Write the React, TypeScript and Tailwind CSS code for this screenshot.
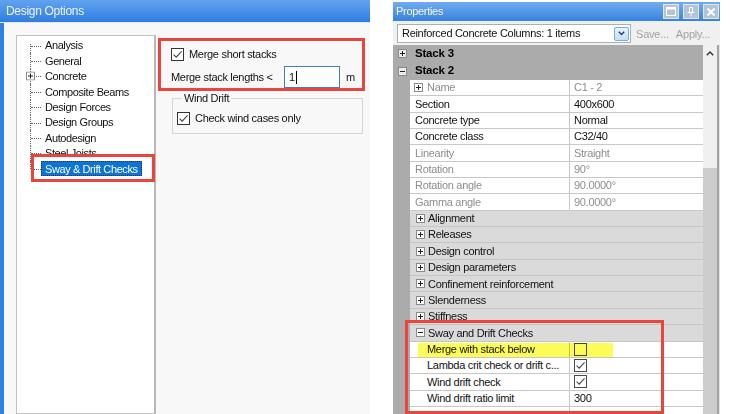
import React from 'react';

const treeItems = [
  'Analysis',
  'General',
  'Concrete',
  'Composite Beams',
  'Design Forces',
  'Design Groups',
  'Autodesign',
  'Steel Joists',
  'Sway & Drift Checks',
];

type GridRow =
  | { kind: 'prop'; name: string; value: string; dim?: boolean; plus?: boolean }
  | { kind: 'cat'; name: string; open?: boolean }
  | { kind: 'sub'; name: string; value?: string; check?: boolean; highlight?: boolean };

const rows: GridRow[] = [
  { kind: 'prop', name: 'Name', value: 'C1 - 2', dim: true, plus: true },
  { kind: 'prop', name: 'Section', value: '400x600' },
  { kind: 'prop', name: 'Concrete type', value: 'Normal' },
  { kind: 'prop', name: 'Concrete class', value: 'C32/40' },
  { kind: 'prop', name: 'Linearity', value: 'Straight', dim: true },
  { kind: 'prop', name: 'Rotation', value: '90°', dim: true },
  { kind: 'prop', name: 'Rotation angle', value: '90.0000°', dim: true },
  { kind: 'prop', name: 'Gamma angle', value: '90.0000°', dim: true },
  { kind: 'cat', name: 'Alignment' },
  { kind: 'cat', name: 'Releases' },
  { kind: 'cat', name: 'Design control' },
  { kind: 'cat', name: 'Design parameters' },
  { kind: 'cat', name: 'Confinement reinforcement' },
  { kind: 'cat', name: 'Slenderness' },
  { kind: 'cat', name: 'Stiffness' },
  { kind: 'cat', name: 'Sway and Drift Checks', open: true },
  { kind: 'sub', name: 'Merge with stack below', check: false, highlight: true },
  { kind: 'sub', name: 'Lambda crit check or drift c...', check: true },
  { kind: 'sub', name: 'Wind drift check', check: true },
  { kind: 'sub', name: 'Wind drift ratio limit', value: '300' },
  { kind: 'sub', name: '', value: '' },
];

function CheckBox({ checked, light }: { checked?: boolean; light?: boolean }) {
  return (
    <span
      className={`inline-flex h-[13px] w-[13px] shrink-0 items-center justify-center border bg-white ${
        light ? 'border-[#4a4a4a]' : 'border-[#333]'
      }`}
    >
      {checked && (
        <svg viewBox="0 0 11 11" className="h-[11px] w-[11px]">
          <path d="M1.6 5.6 L4.2 8.2 L9.6 2.4" fill="none" stroke="#444" strokeWidth="1.1" />
        </svg>
      )}
    </span>
  );
}

function PlusBox({ minus, fill = '#fff' }: { minus?: boolean; fill?: string }) {
  return (
    <svg width="9" height="9" viewBox="0 0 9 9" className="shrink-0">
      <rect x="0.5" y="0.5" width="8" height="8" fill={fill} stroke="#8a8a8a" />
      <path d="M2 4.5h5" stroke="#222" />
      {!minus && <path d="M4.5 2v5" stroke="#222" />}
    </svg>
  );
}

function DesignOptions() {
  return (
    <div className="relative flex h-full w-[370px] shrink-0 flex-col">
      {/* title bar */}
      <div className="flex h-[22px] items-center bg-gradient-to-b from-[#62a3ef] to-[#2d7de2] pl-[6px] text-[12px] tracking-[-0.3px] text-[#eef4fc]">
        Design Options
      </div>
      <div className="flex flex-1 border-t border-[#dfe9f5]">
        <div className="w-[4px] bg-[#2f80e4]" />
        <div className="flex flex-1 bg-[#f8f8f8]">
          {/* tree */}
          <div className="ml-[12px] mt-[12px] w-[140px] border border-r-2 border-[#c2c2c2] border-r-[#b8b8b8] bg-white pt-[2px]">
            {treeItems.map((item, i) => {
              const first = i === 0;
              const last = i === treeItems.length - 1;
              const selected = last;
              return (
                <div key={item} className="flex h-[15.4px] items-center">
                  <div className="relative h-full w-[24px] shrink-0">
                    <span
                      className={`absolute left-[13px] border-l border-dotted border-[#666] ${
                        first ? 'top-[6px] bottom-0' : last ? 'top-0 h-1/2' : 'top-0 bottom-0'
                      }`}
                    />
                    <span className="absolute left-[14px] top-1/2 w-[10px] border-t border-dotted border-[#666]" />
                    {item === 'Concrete' && (
                      <span className="absolute left-[9px] top-1/2 -translate-y-1/2">
                        <PlusBox />
                      </span>
                    )}
                  </div>
                  <span
                    className={`flex h-[15px] items-center whitespace-nowrap px-[3px] text-[11px] tracking-[-0.4px] ${
                      selected
                        ? 'border border-dotted border-[#333] bg-[#0a74d8] text-white'
                        : 'border border-transparent text-[#111]'
                    }`}
                  >
                    {item}
                  </span>
                </div>
              );
            })}
          </div>

          {/* right pane */}
          <div className="ml-[2px] flex-1 pt-[15px]">
            <div className="h-[53px] w-[207px] border-[3px] border-[#e8453c] pt-[7px]">
              <div className="flex h-[13px] items-center pl-[10px]">
                <CheckBox checked />
                <span className="ml-[5px] text-[11px] tracking-[-0.3px] text-[#111]">Merge short stacks</span>
              </div>
              <div className="mt-[5px] flex h-[22px] items-center pl-[10px]">
                <span className="w-[113px] whitespace-nowrap text-[11px] tracking-[-0.3px] text-[#111]">
                  Merge stack lengths &lt;
                </span>
                <div className="flex h-[22px] w-[56px] items-center border border-[#3f80b8] bg-white pl-[4px] text-[11px] text-[#111]">
                  1<span className="ml-[1px] h-[13px] w-px bg-black" />
                </div>
                <span className="ml-[6px] text-[11px] text-[#111]">m</span>
              </div>
            </div>
            <fieldset className="ml-[14px] mt-[1px] w-[191px] border border-[#d6d6d6] pb-[8px] pl-[4px]">
              <legend className="ml-[5px] px-[2px] text-[11px] leading-[13px] tracking-[-0.3px] text-[#111]">
                Wind Drift
              </legend>
              <div className="mt-[7px] flex h-[13px] items-center">
                <CheckBox checked />
                <span className="ml-[5px] text-[11px] tracking-[-0.3px] text-[#111]">Check wind cases only</span>
              </div>
            </fieldset>
          </div>
        </div>
      </div>

      {/* annotation around selected tree node */}
      <div className="absolute left-[31px] top-[154px] h-[28px] w-[124px] border-[3px] border-[#e8453c]" />
    </div>
  );
}

function TitleButton({ children }: { children: React.ReactNode }) {
  return (
    <div className="flex h-[15px] w-[16px] items-center justify-center border border-[#e3e9f1] bg-[#b4c3d6]">
      {children}
    </div>
  );
}

function Properties() {
  return (
    <div className="ml-[23px] flex h-full w-[327px] shrink-0 flex-col pt-[2px]">
      {/* title bar */}
      <div className="flex h-[19px] items-center justify-between bg-gradient-to-b from-[#72acf0] to-[#3582de] pl-[3px] pr-[1px]">
        <span className="text-[11px] tracking-[-0.3px] text-[#f3f7fd]">Properties</span>
        <div className="flex gap-[4px]">
          <TitleButton>
            <svg width="10" height="9" viewBox="0 0 10 9">
              <rect x="0.5" y="0.5" width="9" height="8" fill="none" stroke="#fff" />
              <path d="M1 1.5h8" stroke="#fff" strokeWidth="2" />
            </svg>
          </TitleButton>
          <TitleButton>
            <svg width="8" height="10" viewBox="0 0 8 10">
              <path d="M2.5 0.5h3v5h-3z" fill="none" stroke="#fff" />
              <path d="M0.5 5.5h7M4 5.5v4" stroke="#fff" />
            </svg>
          </TitleButton>
          <TitleButton>
            <svg width="10" height="10" viewBox="0 0 10 10">
              <path d="M1.5 1.5l7 7M8.5 1.5l-7 7" stroke="#fff" strokeWidth="1.8" />
            </svg>
          </TitleButton>
        </div>
      </div>

      {/* toolbar */}
      <div className="flex h-[24px] items-start bg-[#f0f0f0] pl-[4px] pt-[3px]">
        <div className="flex h-[19px] w-[234px] items-center justify-between border border-[#a9afb8] bg-white pl-[4px] pr-[1px]">
          <span className="whitespace-nowrap text-[11px] tracking-[-0.3px] text-[#111]">
            Reinforced Concrete Columns: 1 items
          </span>
          <div className="flex h-[14px] w-[15px] items-center justify-center rounded-[2px] border border-[#78ade0] bg-gradient-to-b from-[#e8f3fd] to-[#c3def8]">
            <svg width="7" height="5" viewBox="0 0 7 5">
              <path d="M0.8 0.8 L3.5 3.6 L6.2 0.8" fill="none" stroke="#1d3f6e" strokeWidth="1.4" />
            </svg>
          </div>
        </div>
        <span className="ml-[5px] mt-[2px] text-[11px] tracking-[-0.2px] text-[#a3a3a3]">Save...</span>
        <span className="ml-[7px] mt-[2px] text-[11px] tracking-[-0.2px] text-[#a3a3a3]">Apply...</span>
      </div>

      {/* grid */}
      <div className="flex flex-1 overflow-hidden">
        <div className="relative w-[310px] text-[11px] tracking-[-0.3px]">
          <div className="flex h-[17.4px] items-center bg-[#ababab] pl-[5px]">
            <PlusBox fill="#ececec" />
            <span className="ml-[8px] text-[11.5px] font-bold tracking-[-0.2px] text-black">Stack 3</span>
          </div>
          <div className="flex h-[17.4px] items-center bg-[#ababab] pl-[5px]">
            <PlusBox minus fill="#ececec" />
            <span className="ml-[8px] text-[11.5px] font-bold tracking-[-0.2px] text-black">Stack 2</span>
          </div>
          {rows.map((r, i) => (
            <div key={i} className="relative flex h-[16.37px]">
              <div className="w-[17px] shrink-0 bg-[#ababab]" />
              {r.kind === 'cat' ? (
                <div className="flex flex-1 items-center border-b border-[#c5c5c5] bg-[#dadada] pl-[6px]">
                  <PlusBox minus={r.open} />
                  <span className="ml-[3px] text-[#111]">{r.name}</span>
                </div>
              ) : (
                <>
                  <div
                    className={`flex w-[160px] shrink-0 items-center border-b border-r border-[#c8c8c8] bg-white ${
                      r.kind === 'sub' ? 'pl-[17px]' : r.kind === 'prop' && r.plus ? 'pl-[4px]' : 'pl-[5px]'
                    } ${r.kind === 'prop' && r.dim ? 'text-[#8e8e8e]' : 'text-[#111]'}`}
                  >
                    {r.kind === 'prop' && r.plus && (
                      <span className="mr-[4px] flex">
                        <PlusBox />
                      </span>
                    )}
                    <span className="whitespace-nowrap">{r.name}</span>
                  </div>
                  <div
                    className={`flex flex-1 items-center border-b border-[#c8c8c8] bg-white pl-[4px] ${
                      r.kind === 'prop' && r.dim ? 'text-[#8e8e8e]' : 'text-[#111]'
                    }`}
                  >
                    {r.kind === 'sub' && r.check !== undefined ? (
                      <CheckBox checked={r.check} light />
                    ) : (
                      <span>{r.value}</span>
                    )}
                  </div>
                </>
              )}
              {r.kind === 'sub' && r.highlight && (
                <div className="absolute bottom-[1px] left-[25px] top-[1px] w-[195px] bg-[#fcfc58] mix-blend-multiply" />
              )}
            </div>
          ))}

          {/* annotation around sway & drift group */}
          <div className="absolute left-[12px] top-[275px] h-[94px] w-[259px] border-[3px] border-[#e8453c]" />
        </div>

        {/* scrollbar */}
        <div className="flex w-[14px] flex-col bg-[#f0f0f0]">
          <div className="flex h-[17px] items-center justify-center">
            <svg width="8" height="5" viewBox="0 0 8 5">
              <path d="M0.8 4.2 L4 1 L7.2 4.2" fill="none" stroke="#333" strokeWidth="1.4" />
            </svg>
          </div>
          <div className="h-[106px]" />
          <div className="flex-1 bg-[#cdcdcd]" />
        </div>
        <div className="w-[2px] bg-[#a3a3a3]" />
        <div className="w-px bg-[#e4e4e4]" />
      </div>
    </div>
  );
}

export default function App() {
  return (
    <div className="flex h-[414px] w-[730px] overflow-hidden bg-white font-['Liberation_Sans',Arial,sans-serif]">
      <DesignOptions />
      <Properties />
    </div>
  );
}
